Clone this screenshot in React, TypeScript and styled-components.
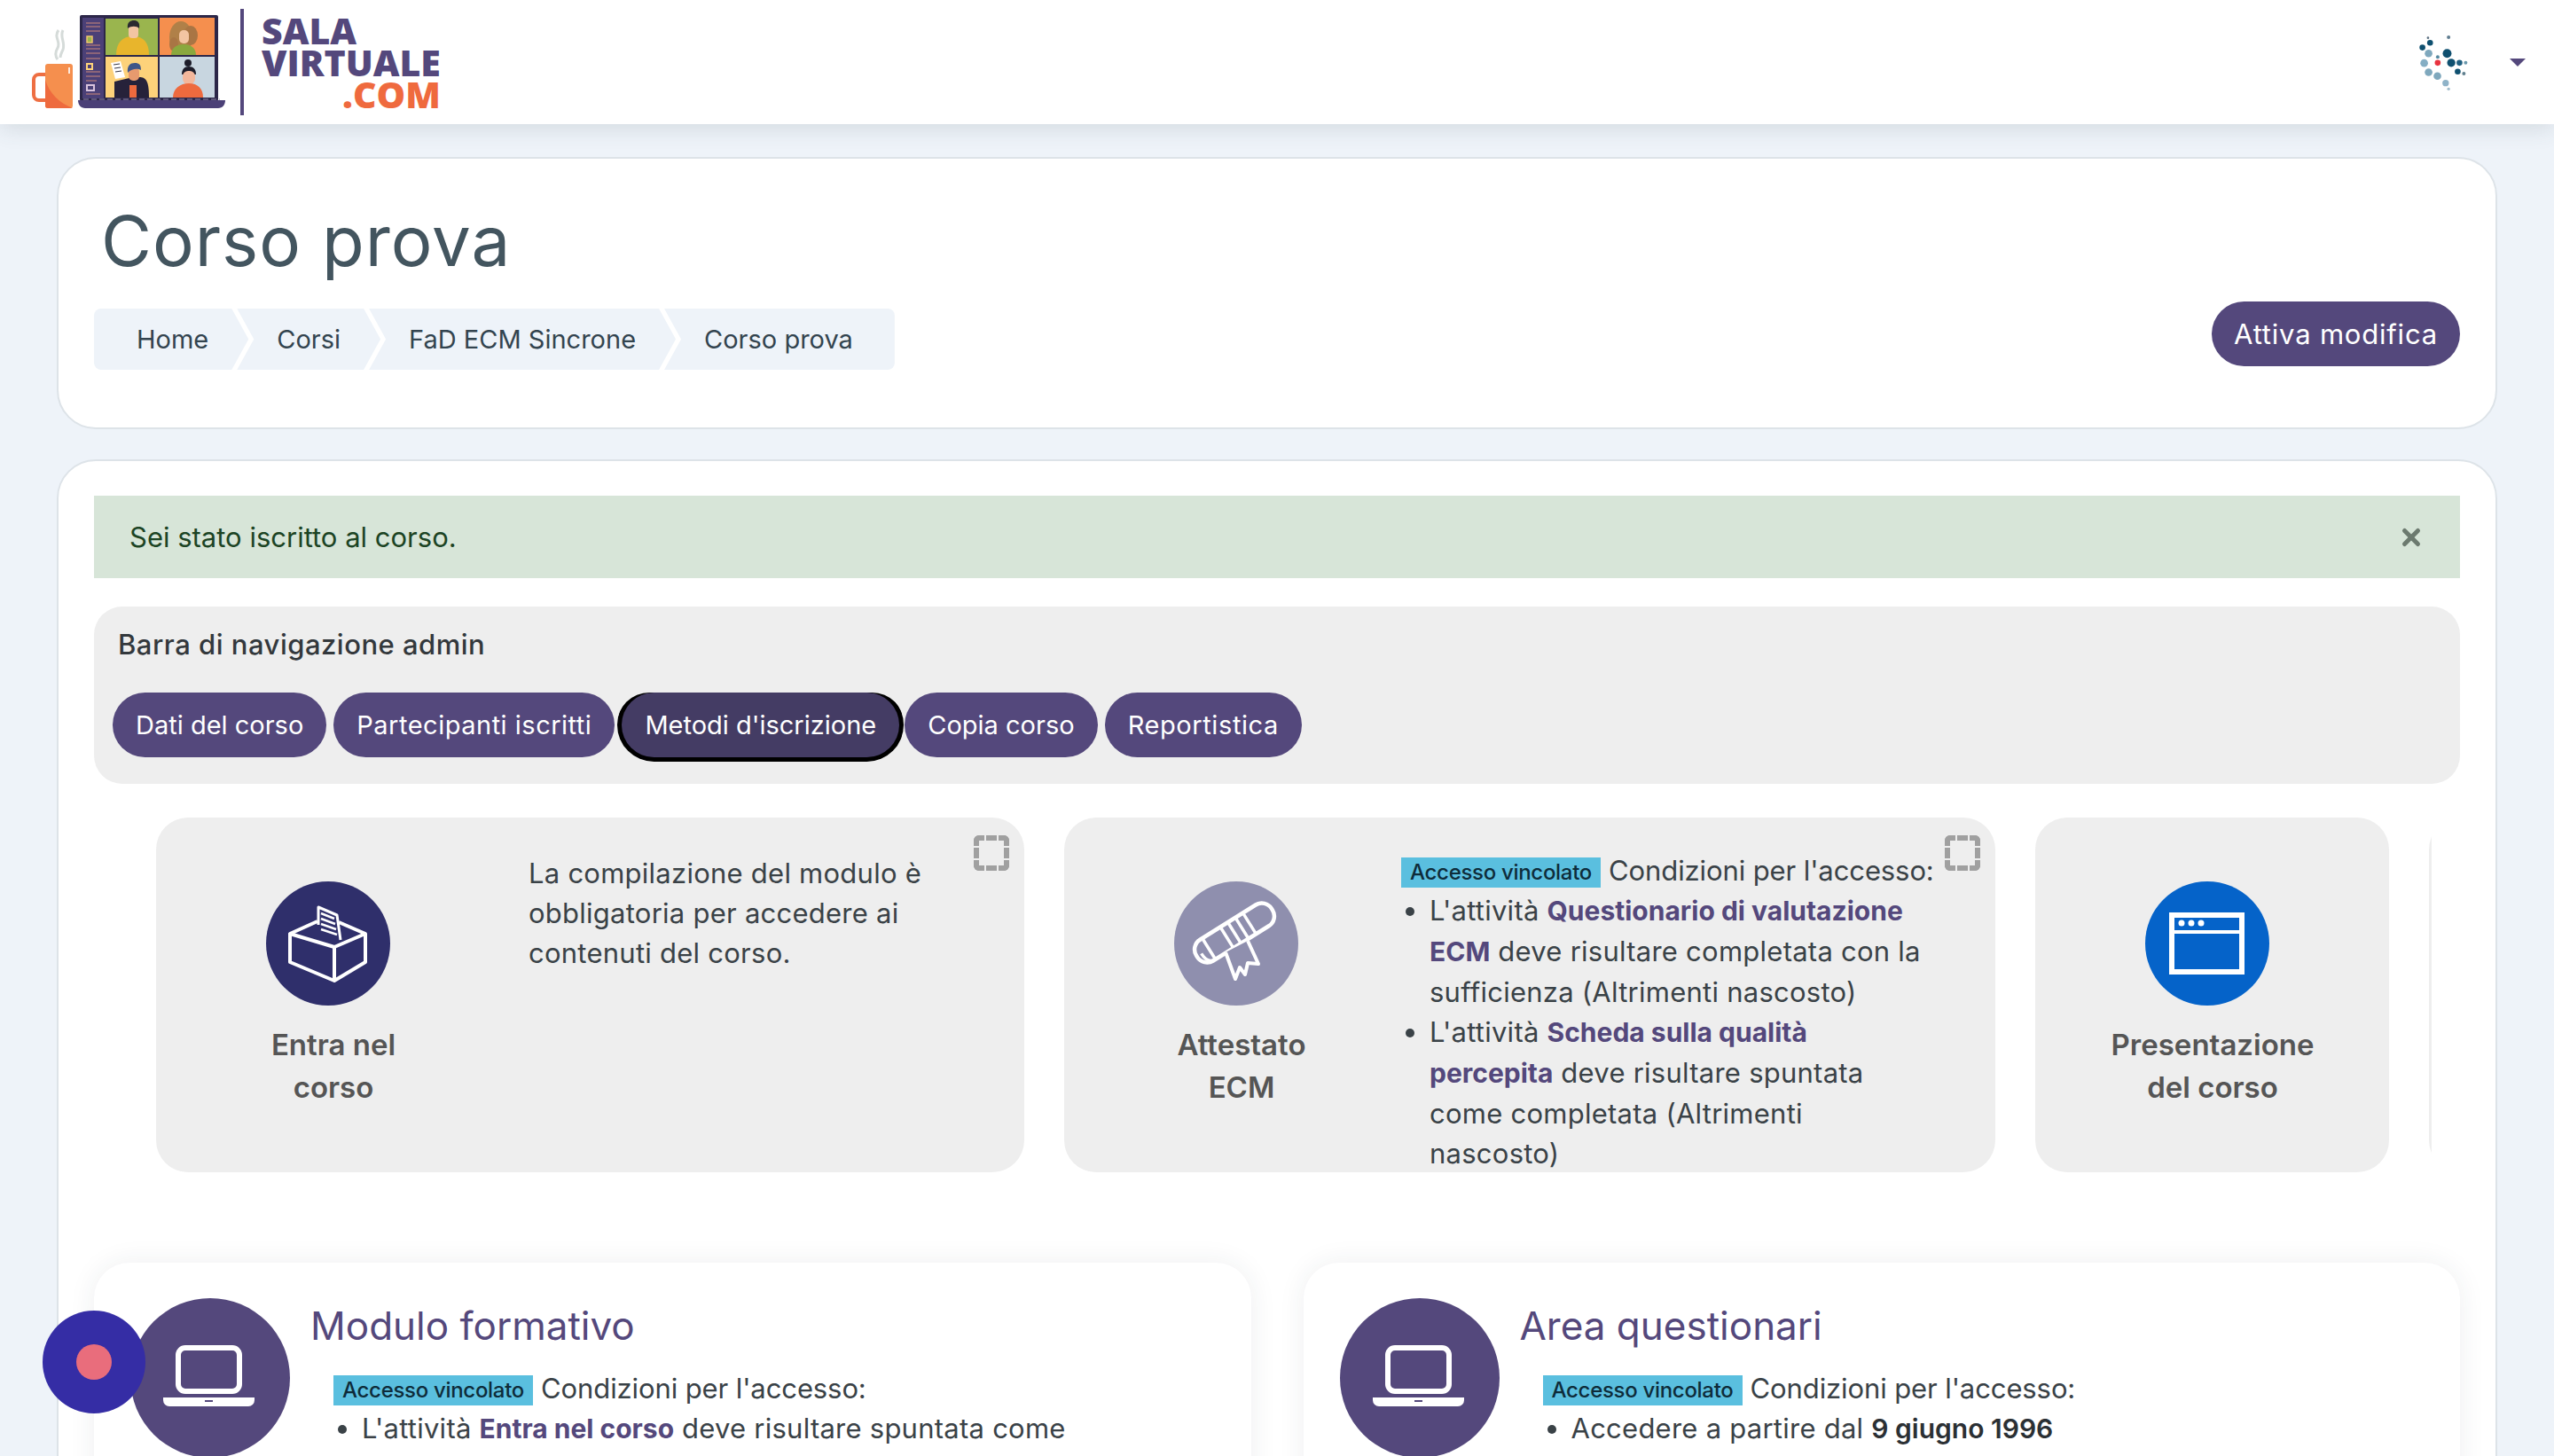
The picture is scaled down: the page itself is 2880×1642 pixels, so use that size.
import React from 'react';
import styled, { createGlobalStyle } from 'styled-components';
import { X } from 'lucide-react';

const purple = '#54487c';
const text = '#3a4247';
const grey = '#eeeeee';
const font = `Inter, "Noto Sans", "Liberation Sans", sans-serif`;

const GlobalStyle = createGlobalStyle`
  html, body {
    margin: 0;
    height: 1642px;
    overflow: hidden;
    background: #eef3f9;
    font-family: ${font};
    font-size: 31px;
    letter-spacing: 0.25px;
    line-height: 45px;
    color: ${text};
  }
  * { box-sizing: border-box; }
`;

const Header = styled.header`
  height: 140px;
  background: #fff;
  box-shadow: 0 4px 24px rgba(60, 80, 90, 0.16);
  display: flex;
  justify-content: space-between;
  align-items: center;
  position: relative;
`;

const Logo = styled.div`
  display: flex;
  align-items: center;
  padding-left: 30px;
`;

const LogoArt = styled.svg`
  width: 230px;
  height: 140px;
  display: block;
`;

const LogoRule = styled.div`
  width: 4px;
  height: 120px;
  margin-left: 11px;
  background: ${purple};
`;

const LogoWords = styled.div`
  margin-left: 20px;
  display: flex;
  flex-direction: column;
  font-family: "Open Sans", sans-serif;
  font-weight: 800;
  font-size: 41px;
  letter-spacing: 0;
  line-height: 36px;
  color: ${purple};
`;

const LogoCom = styled.span`
  align-self: flex-end;
  color: #ef6a3e;
`;

const UserMenu = styled.div`
  display: flex;
  align-items: center;
  gap: 44px;
  padding-right: 32px;
`;

const Avatar = styled.svg`
  width: 63px;
  height: 72px;
  display: block;
`;

const Caret = styled.span`
  width: 0;
  height: 0;
  border-left: 9px solid transparent;
  border-right: 9px solid transparent;
  border-top: 9px solid ${purple};
`;

const Main = styled.main`
  padding: 37px 64px 0;
`;

const TitleCard = styled.section`
  height: 307px;
  background: #fff;
  border: 2px solid #dde3e8;
  border-radius: 44px;
  padding: 0 40px 65px;
  display: flex;
  justify-content: space-between;
  align-items: flex-end;
`;

const Title = styled.h1`
  margin: 0 0 29px 8px;
  font-size: 78px;
  line-height: 94px;
  font-weight: 400;
  color: #43555f;
  letter-spacing: 1px;
`;

const Breadcrumb = styled.nav`
  display: flex;
  height: 69px;
  border-radius: 8px;
  overflow: hidden;
`;

const Crumb = styled.span<{ $first?: boolean; $last?: boolean }>`
  display: flex;
  align-items: center;
  padding: 0 ${(p) => (p.$last ? '47px' : '45px')} 0 ${(p) => (p.$first ? '48px' : '45px')};
  margin-left: ${(p) => (p.$first ? '0' : '-13px')};
  background: #eef3f9;
  font-size: 29px;
  letter-spacing: 0;
  color: #33444f;
  white-space: nowrap;
  clip-path: polygon(
    0 0,
    ${(p) => (p.$last ? '100% 0, 100% 100%' : 'calc(100% - 19px) 0, 100% 50%, calc(100% - 19px) 100%')},
    0 100%
    ${(p) => (p.$first ? '' : ', 19px 50%')}
  );
`;

const Button = styled.a<{ $tracking?: number }>`
  display: flex;
  align-items: center;
  justify-content: center;
  height: 73px;
  border-radius: 37px;
  padding: 0 26px;
  background: ${purple};
  color: #fff;
  font-size: 29px;
  letter-spacing: ${(p) => p.$tracking ?? 0}px;
  white-space: nowrap;
`;

const EditButton = styled(Button)`
  width: 280px;
  margin-bottom: 4px;
  font-size: 31px;
`;

const ContentCard = styled.section`
  margin-top: 34px;
  height: 1200px;
  background: #fff;
  border: 2px solid #dde3e8;
  border-radius: 44px;
  padding: 39px 40px 0;
`;

const Alert = styled.div`
  height: 93px;
  background: #d7e5d8;
  color: #1c4424;
  letter-spacing: 0;
  display: flex;
  align-items: center;
  justify-content: space-between;
  padding: 0 40px;
`;

const CloseIcon = styled(X)`
  width: 30px;
  height: 30px;
  color: #6c7a6f;
`;

const AdminBar = styled.div`
  margin-top: 32px;
  height: 200px;
  background: ${grey};
  border-radius: 32px;
  padding: 20px 21px 0;
`;

const AdminTitle = styled.div`
  margin-left: 6px;
  font-weight: 500;
  letter-spacing: 0.5px;
  color: #33383c;
`;

const PillRow = styled.div`
  display: flex;
  gap: 8px;
  margin-top: 32px;
`;

const Pill = styled(Button)<{ $active?: boolean }>`
  background: ${(p) => (p.$active ? '#443c64' : purple)};
  ${(p) =>
    p.$active
      ? `
    margin-right: -2px;
    box-shadow: 0 0 0 5px #000;
    clip-path: inset(0 -6px -6px -6px round 37px);
  `
      : ''}
`;

const Carousel = styled.div`
  margin: 38px 32px 0 70px;
  display: flex;
  gap: 45px;
  overflow: hidden;
`;

const Slide = styled.article<{ $width: number }>`
  position: relative;
  flex: 0 0 ${(p) => p.$width}px;
  height: 400px;
  background: ${grey};
  border-radius: 36px;
  display: flex;
  overflow: hidden;
`;

const SlideHead = styled.div`
  flex: 0 0 400px;
  padding-top: 72px;
  display: flex;
  flex-direction: column;
  align-items: center;
`;

const IconCircle = styled.div<{ $color: string; $size: number }>`
  flex: 0 0 ${(p) => p.$size}px;
  width: ${(p) => p.$size}px;
  height: ${(p) => p.$size}px;
  border-radius: 50%;
  background: ${(p) => p.$color};
  display: flex;
`;

const SlideIcon = styled(IconCircle)`
  margin-right: 12px;
`;

const IconArt = styled.svg`
  width: 100%;
  height: 100%;
  display: block;
`;

const SlideName = styled.div`
  margin-top: 20px;
  font-size: 33px;
  font-weight: 600;
  letter-spacing: 0;
  line-height: 48px;
  text-align: center;
  color: #555;
`;

const SlideText = styled.div<{ $left: number; $width: number; $top: number }>`
  margin-left: ${(p) => p.$left}px;
  width: ${(p) => p.$width}px;
  padding-top: ${(p) => p.$top}px;
`;

const Completion = styled.span`
  position: absolute;
  top: 20px;
  right: 17px;
  width: 40px;
  height: 40px;
  border: 6px dashed #a0a0a0;
  border-radius: 6px;
`;

const AccessLine = styled.div`
  white-space: nowrap;
`;

const Tag = styled.span`
  display: inline-block;
  height: 34px;
  line-height: 34px;
  padding: 0 10px;
  margin-right: 9px;
  background: #5abfdf;
  color: #0e2c3a;
  font-size: 24px;
  font-weight: 500;
  letter-spacing: -0.3px;
  vertical-align: 1px;
`;

const Conditions = styled.span`
  letter-spacing: -0.1px;
`;

const Rules = styled.ul`
  margin: 0;
  padding-left: 32px;
`;

const Strong = styled.strong`
  font-size: 30px;
  font-weight: 700;
  letter-spacing: 0;
  color: ${purple};
`;

const DarkStrong = styled.span`
  font-size: 30px;
  font-weight: 600;
  letter-spacing: 0;
  color: #2b3034;
`;

const SectionRow = styled.div`
  margin-top: 102px;
  display: grid;
  grid-template-columns: 1fr 1fr;
  gap: 59px;
`;

const SectionCard = styled.article`
  height: 400px;
  background: #fff;
  border-radius: 40px;
  box-shadow: 0 0 30px rgba(40, 50, 70, 0.08);
  padding: 40px 41px;
  display: flex;
  gap: 23px;
`;

const SectionBody = styled.div`
  min-width: 0;
`;

const SectionTitle = styled.h3`
  margin: 0;
  font-size: 44px;
  letter-spacing: 0;
  line-height: 62px;
  font-weight: 400;
  color: ${purple};
`;

const SectionInfo = styled.div`
  margin: 17px 0 0 26px;
  width: 860px;
`;

const FloatingButton = styled.button`
  position: fixed;
  left: 48px;
  top: 1478px;
  width: 116px;
  height: 116px;
  padding: 0;
  border: none;
  border-radius: 50%;
  background: #352da5;
  display: flex;
  align-items: center;
  justify-content: center;
`;

const FloatingDot = styled.span`
  width: 40px;
  height: 40px;
  border-radius: 50%;
  background: #e96d7c;
`;

const avatarDots = [
  [175, 130, 4, '#5a6f80'],
  [245, 128, 6, '#5f7d90'],
  [182, 147, 10, '#0f5070'],
  [156, 163, 10, '#0f5070'],
  [177, 183, 13, '#7fa8bd'],
  [240, 183, 15, '#0f5070'],
  [208, 195, 6, '#5588a0'],
  [162, 216, 13, '#85aec4'],
  [208, 215, 10, '#e8333f'],
  [254, 215, 14, '#0f5070'],
  [282, 215, 10, '#1f5f80'],
  [303, 215, 6, '#6a98ad'],
  [177, 247, 13, '#7fa8bd'],
  [207, 260, 13, '#7fa8bd'],
  [276, 245, 10, '#0f5070'],
  [297, 252, 6, '#60808f'],
  [235, 284, 11, '#8fb3c8'],
  [245, 304, 5, '#a0bccb'],
] as const;

function LaptopScene() {
  return (
    <LogoArt viewBox="30 0 230 140">
      {/* steam */}
      <path d="M66 34c-6 8 3 13-1 20-3 5-3 9 0 13M71 34c-4 8 3 14 0 22-2 4-3 7-3 9" fill="none" stroke="#d5dbd9" strokeWidth="3" />
      {/* mug */}
      <path d="M52 84h-8a6 6 0 0 0-6 6v17a6 6 0 0 0 6 6h8" fill="none" stroke="#ee6f43" strokeWidth="4" />
      <rect x="51" y="72" width="31" height="50" rx="3" fill="#f58f4e" />
      <path d="M51 90c5 16 16 26 31 32H54a3 3 0 0 1-3-3z" fill="#ee6a3e" />
      <rect x="77" y="76" width="2" height="7" fill="#fff" opacity="0.8" />
      {/* laptop */}
      <rect x="90" y="17" width="156" height="97" rx="2" fill="#2c2748" />
      <rect x="93" y="20" width="24" height="91" fill="#4b4077" />
      <path d="M97 26h16M97 30h16M97 35h16M97 51h16M97 55h16M97 60h16M97 66h16M97 81h16M97 86h16M97 91h12M97 106h16" stroke="#a2707a" strokeWidth="1.5" />
      <rect x="98" y="41" width="6" height="7" fill="#9ab54e" stroke="#f0c56d" strokeWidth="1.5" />
      <rect x="98" y="72" width="6" height="6" fill="#4b4077" stroke="#fdd27a" strokeWidth="2" />
      <rect x="98" y="96" width="8" height="6" fill="#4b4077" stroke="#d9c3dd" strokeWidth="2" />
      <rect x="119" y="21" width="59" height="41" fill="#9ab54e" />
      <rect x="180" y="20" width="62" height="42" fill="#f58f4e" />
      <rect x="119" y="64" width="59" height="46" fill="#fdd27a" />
      <rect x="180" y="64" width="62" height="46" fill="#c8d6e0" />
      {/* person 1 */}
      <path d="M131 62c0-14 7-21 19-21s18 7 18 21z" fill="#e8b52c" />
      <rect x="145" y="28" width="11" height="15" rx="4" fill="#f3c5a3" />
      <path d="M144 32c-1-7 3-9 7-9s7 2 6 9c-3-3-9-3-13 0z" fill="#2a2a30" />
      {/* person 2 */}
      <ellipse cx="204" cy="42" rx="13" ry="18" fill="#b08048" />
      <ellipse cx="215" cy="40" rx="8" ry="11" fill="#a97544" />
      <ellipse cx="196" cy="50" rx="5" ry="8" fill="#a97544" />
      <rect x="202" y="34" width="11" height="15" rx="5" fill="#f3c5a3" />
      <path d="M193 62c0-8 6-12 14-12s14 4 14 12z" fill="#8aa83e" />
      {/* person 3 */}
      <path d="M129 110V92l21-5h7c8 0 11 5 11 23z" fill="#26223a" />
      <rect x="146" y="96" width="8" height="14" fill="#ee6a3e" />
      <rect x="145" y="76" width="12" height="15" rx="5" fill="#e79a6e" />
      <path d="M144 82c-1-8 3-11 8-11s7 2 7 8c-4-2-10-2-15 3z" fill="#3f5688" />
      <path d="M125 71l11-2 5 18-11 2z" fill="#fff" />
      <path d="M128 73l7-1M129 77l7-1M130 81l7-1" stroke="#3a3a4a" strokeWidth="1.2" />
      {/* person 4 */}
      <circle cx="212" cy="71" r="4" fill="#1d1d2a" />
      <path d="M205 84c0-6 3-9 8-9s8 3 8 9z" fill="#1d1d2a" />
      <rect x="206" y="80" width="14" height="15" rx="6" fill="#f3b79b" />
      <path d="M195 110c0-10 8-16 18-16s16 6 16 16z" fill="#ee6a3e" />
      {/* base */}
      <path d="M88 113h166c0 5-3 9-8 9H96c-5 0-8-4-8-9z" fill="#4b4077" />
      <path d="M94 112h154" stroke="#8e86aa" strokeWidth="1" strokeDasharray="6 3" />
    </LogoArt>
  );
}

function BallotIcon() {
  return (
    <IconArt viewBox="0 0 140 140" fill="none" stroke="#fff" strokeWidth="4" strokeLinejoin="round">
      <path d="M59 49V29l21 9 4 28" strokeWidth="3" />
      <path d="M62 36l15 6M62 42l16 6M62 48l17 6M62 54l18 6" strokeWidth="2.5" />
      <path d="M58 45L27 59l50 15 35-15-30-13" />
      <path d="M27 59v32l50 21 35-21V59M77 74v38" />
    </IconArt>
  );
}

function DiplomaIcon() {
  return (
    <IconArt viewBox="0 0 140 140" fill="none" stroke="#fff" strokeWidth="4.5" strokeLinejoin="round">
      <g transform="rotate(-32 68 58)">
        <rect x="18" y="44" width="100" height="28" rx="13" />
        <path d="M34 45v26M34 72c-7 0-10-5-10-14M58 45v26M68 45v26M78 45v26M88 45v26" strokeWidth="3.5" />
      </g>
      <path d="M58 80l11 30 5-13 6 8 3-13 12 1-12-26" fill="#8f8fae" strokeWidth="4" />
    </IconArt>
  );
}

function WindowIcon() {
  return (
    <IconArt viewBox="0 0 140 140" fill="none" stroke="#fff" strokeWidth="6">
      <rect x="30" y="38" width="79" height="64" />
      <path d="M28 57h84" strokeWidth="4" />
      <circle cx="41" cy="47" r="3.5" fill="#fff" stroke="none" />
      <circle cx="52" cy="47" r="3.5" fill="#fff" stroke="none" />
      <circle cx="63" cy="47" r="3.5" fill="#fff" stroke="none" />
    </IconArt>
  );
}

function LaptopIcon() {
  return (
    <IconArt viewBox="0 0 180 180" fill="none">
      <rect x="54" y="56" width="69" height="49" rx="8" stroke="#fff" strokeWidth="6" />
      <path d="M37 112h103v3a7 7 0 0 1-7 7H44a7 7 0 0 1-7-7z" fill="#fff" />
      <rect x="84" y="115" width="9" height="2" fill={purple} />
    </IconArt>
  );
}

function AccessHead() {
  return (
    <AccessLine>
      <Tag>Accesso vincolato</Tag>
      <Conditions>Condizioni per l'accesso:</Conditions>
    </AccessLine>
  );
}

function App() {
  return (
    <>
      <GlobalStyle />
      <Header>
        <Logo>
          <LaptopScene />
          <LogoRule />
          <LogoWords>
            <span>SALA</span>
            <span>VIRTUALE</span>
            <LogoCom>.COM</LogoCom>
          </LogoWords>
        </Logo>
        <UserMenu>
          <Avatar viewBox="130 105 190 215">
            {avatarDots.map(([x, y, r, c]) => (
              <circle key={`${x}-${y}`} cx={x} cy={y} r={r} fill={c} />
            ))}
          </Avatar>
          <Caret />
        </UserMenu>
      </Header>

      <Main>
        <TitleCard>
          <div>
            <Title>Corso prova</Title>
            <Breadcrumb>
              <Crumb $first>Home</Crumb>
              <Crumb>Corsi</Crumb>
              <Crumb>FaD ECM Sincrone</Crumb>
              <Crumb $last>Corso prova</Crumb>
            </Breadcrumb>
          </div>
          <EditButton $tracking={0.8}>Attiva modifica</EditButton>
        </TitleCard>

        <ContentCard>
          <Alert>
            Sei stato iscritto al corso.
            <CloseIcon strokeWidth={4} />
          </Alert>

          <AdminBar>
            <AdminTitle>Barra di navigazione admin</AdminTitle>
            <PillRow>
              <Pill>Dati del corso</Pill>
              <Pill $tracking={0.5}>Partecipanti iscritti</Pill>
              <Pill $active>Metodi d'iscrizione</Pill>
              <Pill>Copia corso</Pill>
              <Pill $tracking={0.6}>Reportistica</Pill>
            </PillRow>
          </AdminBar>

          <Carousel>
            <Slide $width={979}>
              <SlideHead>
                <SlideIcon $color="#2f2f6b" $size={140}>
                  <BallotIcon />
                </SlideIcon>
                <SlideName>
                  Entra nel
                  <br />
                  corso
                </SlideName>
              </SlideHead>
              <SlideText $left={20} $width={460} $top={40}>
                La compilazione del modulo è obbligatoria per accedere ai contenuti del corso.
              </SlideText>
              <Completion />
            </Slide>

            <Slide $width={1050}>
              <SlideHead>
                <SlideIcon $color="#8f8fae" $size={140}>
                  <DiplomaIcon />
                </SlideIcon>
                <SlideName>
                  Attestato
                  <br />
                  ECM
                </SlideName>
              </SlideHead>
              <SlideText $left={-20} $width={596} $top={37}>
                <AccessHead />
                <Rules>
                  <li>
                    L'attività <Strong>Questionario di valutazione ECM</Strong> deve risultare completata con la
                    sufficienza (Altrimenti nascosto)
                  </li>
                  <li>
                    L'attività <Strong>Scheda sulla qualità percepita</Strong> deve risultare spuntata come completata
                    (Altrimenti nascosto)
                  </li>
                </Rules>
              </SlideText>
              <Completion />
            </Slide>

            <Slide $width={399}>
              <SlideHead>
                <SlideIcon $color="#0563c9" $size={140}>
                  <WindowIcon />
                </SlideIcon>
                <SlideName>
                  Presentazione
                  <br />
                  del corso
                </SlideName>
              </SlideHead>
            </Slide>

            <Slide $width={399} />
          </Carousel>

          <SectionRow>
            <SectionCard>
              <IconCircle $color={purple} $size={180}>
                <LaptopIcon />
              </IconCircle>
              <SectionBody>
                <SectionTitle>Modulo formativo</SectionTitle>
                <SectionInfo>
                  <AccessHead />
                  <Rules>
                    <li>
                      L'attività <Strong>Entra nel corso</Strong> deve risultare spuntata come completata (Altrimenti
                      nascosto)
                    </li>
                  </Rules>
                </SectionInfo>
              </SectionBody>
            </SectionCard>

            <SectionCard>
              <IconCircle $color={purple} $size={180}>
                <LaptopIcon />
              </IconCircle>
              <SectionBody>
                <SectionTitle>Area questionari</SectionTitle>
                <SectionInfo>
                  <AccessHead />
                  <Rules>
                    <li>
                      Accedere a partire dal <DarkStrong>9 giugno 1996</DarkStrong>
                    </li>
                  </Rules>
                </SectionInfo>
              </SectionBody>
            </SectionCard>
          </SectionRow>
        </ContentCard>
      </Main>

      <FloatingButton>
        <FloatingDot />
      </FloatingButton>
    </>
  );
}

export default App;
